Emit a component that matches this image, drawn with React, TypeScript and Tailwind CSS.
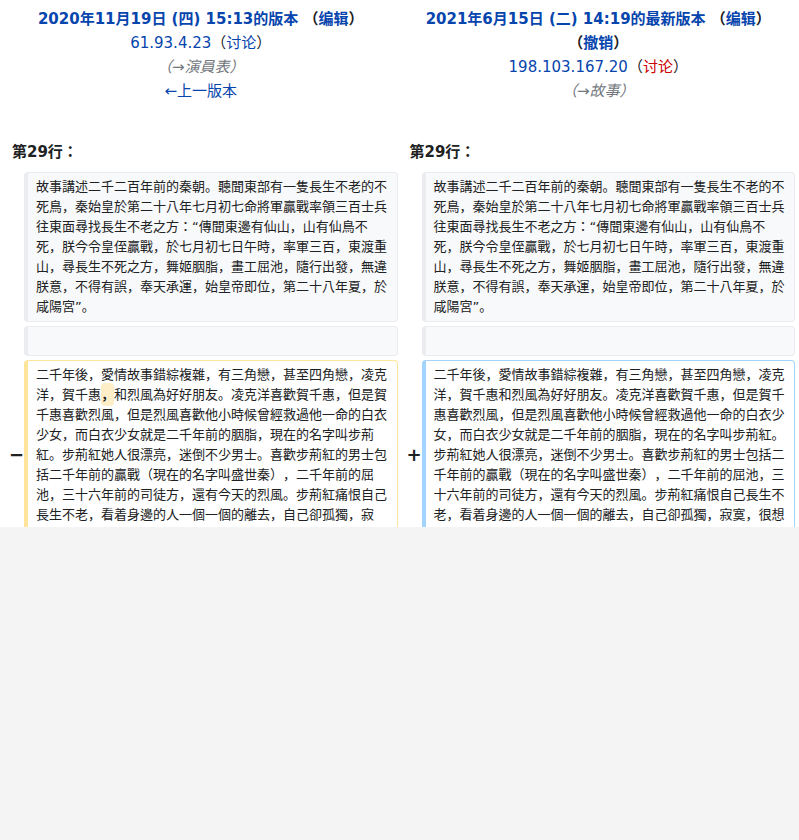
const context =
  '故事講述二千二百年前的秦朝。聽聞東部有一隻長生不老的不死鳥，秦始皇於第二十八年七月初七命將軍贏戰率領三百士兵往東面尋找長生不老之方：“傳聞東邊有仙山，山有仙鳥不死，朕今令皇侄贏戰，於七月初七日午時，率軍三百，東渡重山，尋長生不死之方，舞姬胭脂，畫工屈池，隨行出發，無違朕意，不得有誤，奉天承運，始皇帝即位，第二十八年夏，於咸陽宮”。';

const rest =
  '和烈風為好好朋友。凌克洋喜歡賀千惠，但是賀千惠喜歡烈風，但是烈風喜歡他小時候曾經救過他一命的白衣少女，而白衣少女就是二千年前的胭脂，現在的名字叫步荊紅。步荊紅她人很漂亮，迷倒不少男士。喜歡步荊紅的男士包括二千年前的贏戰（現在的名字叫盛世秦），二千年前的屈池，三十六年前的司徒方，還有今天的烈風。步荊紅痛恨自己長生不老，看着身邊的人一個一個的離去，自己卻孤獨，寂寞，很想一死了之。';

const head = '二千年後，愛情故事錯綜複雜，有三角戀，甚至四角戀，凌克洋，賀千惠';

const box = 'rounded-[4px] border border-l-4 px-2 py-1 text-[13px] leading-5 break-all';

const Marker = ({ sign }: { sign: string }) => (
  <div className="self-center pl-[5px] text-[18px] font-bold leading-6">{sign}</div>
);

export default function App() {
  return (
    <div className="min-h-screen bg-[#f4f4f4]">
      <div className="h-[527px] overflow-hidden bg-white text-[#202122] font-['DejaVu_Sans','Noto_Sans_CJK_JP',sans-serif] [text-spacing-trim:space-all]">
        <div className="grid grid-cols-[16px_minmax(0,1fr)_16px_minmax(0,1fr)] gap-1 px-1 pt-[7px]">
          {/* Old revision header */}
          <div className="col-span-2 text-center text-[15px] leading-6">
            <div className="font-bold">
              <a className="text-[#0645ad]">2020年11月19日 (四) 15:13的版本</a>{' '}
              <span className="whitespace-nowrap">
                （<a className="text-[#0645ad]">编辑</a>）
              </span>
            </div>
            <div>
              <a className="text-[#0645ad]">61.93.4.23</a>（<a className="text-[#0645ad]">讨论</a>）
            </div>
            <div className="italic text-[#72777d]">
              （<a>→演員表</a>）
            </div>
            <div>
              <a className="text-[#0645ad]">←上一版本</a>
            </div>
          </div>

          {/* New revision header */}
          <div className="col-span-2 text-center text-[15px] leading-6">
            <div className="font-bold">
              <a className="text-[#0645ad]">2021年6月15日 (二) 14:19的最新版本</a>{' '}
              <span className="whitespace-nowrap">
                （<a className="text-[#0645ad]">编辑</a>）
              </span>{' '}
              <span className="whitespace-nowrap">
                （<a className="text-[#0645ad]">撤销</a>）
              </span>
            </div>
            <div>
              <a className="text-[#0645ad]">198.103.167.20</a>（<a className="text-[#cc0000]">讨论</a>）
            </div>
            <div className="italic text-[#72777d]">
              （<a>→故事</a>）
            </div>
          </div>

          {/* Line numbers */}
          <div className="col-span-2 mt-[33px] pb-1 pl-2 text-[15px] font-bold leading-6">第29行：</div>
          <div className="col-span-2 mt-[33px] pb-1 pl-2 text-[15px] font-bold leading-6">第29行：</div>

          {/* Context */}
          <div />
          <div className={`${box} border-[#eaecf0] bg-[#f8f9fa]`}>{context}</div>
          <div />
          <div className={`${box} border-[#eaecf0] bg-[#f8f9fa]`}>{context}</div>

          <div />
          <div className={`${box} border-[#eaecf0] bg-[#f8f9fa]`}>
            <br />
          </div>
          <div />
          <div className={`${box} border-[#eaecf0] bg-[#f8f9fa]`}>
            <br />
          </div>

          {/* Changed paragraph */}
          <Marker sign="−" />
          <div className={`${box} border-[#ffe49c] bg-white`}>
            {head}
            <del className="rounded-[4px] bg-[#feeec8] py-1 font-bold no-underline">，</del>
            {rest}
          </div>
          <Marker sign="+" />
          <div className={`${box} border-[#a3d3ff] bg-white`}>
            {head}
            {rest}
          </div>
        </div>
      </div>
    </div>
  );
}
